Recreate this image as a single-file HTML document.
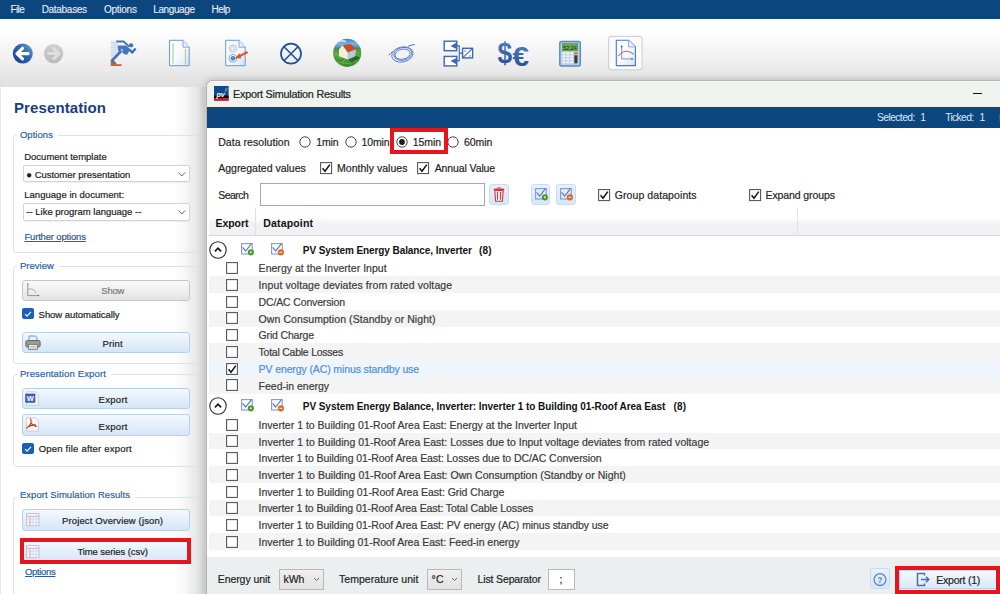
<!DOCTYPE html>
<html><head><meta charset="utf-8"><style>
html,body{margin:0;padding:0;width:1000px;height:594px;overflow:hidden;background:#e8e8e8}
body{position:relative;font-family:"Liberation Sans",sans-serif}
.t{position:absolute;white-space:nowrap;line-height:1;font-family:"Liberation Sans",sans-serif;-webkit-text-stroke-width:0.2px}
svg{overflow:visible}
</style></head><body>
<div style="position:absolute;left:0px;top:0px;width:1000px;height:594px;background:#e8e8e8"></div>
<div style="position:absolute;left:0px;top:0px;width:1000px;height:19px;background:#0c467f"></div>
<div class="t" style="left:10.60px;top:5.00px;font-size:10px;color:#e9eef4;letter-spacing:-0.671px;-webkit-text-stroke-width:0.1px">File</div>
<div class="t" style="left:41.70px;top:5.00px;font-size:10px;color:#e9eef4;letter-spacing:-0.301px;-webkit-text-stroke-width:0.1px">Databases</div>
<div class="t" style="left:104.00px;top:5.00px;font-size:10px;color:#e9eef4;letter-spacing:-0.260px;-webkit-text-stroke-width:0.1px">Options</div>
<div class="t" style="left:153.30px;top:5.00px;font-size:10px;color:#e9eef4;letter-spacing:-0.399px;-webkit-text-stroke-width:0.1px">Language</div>
<div class="t" style="left:211.60px;top:5.00px;font-size:10px;color:#e9eef4;letter-spacing:-0.622px;-webkit-text-stroke-width:0.1px">Help</div>
<div style="position:absolute;left:0px;top:19px;width:1000px;height:68px;background:linear-gradient(#ffffff 0%,#fcfcfc 25%,#f0f0f0 60%,#e5e5e5 85%,#e0e0e0 100%)"></div>
<div style="position:absolute;left:1px;top:86.5px;width:205px;height:510px;background:linear-gradient(90deg,#ffffff 0%,#ffffff 84%,#f6f6f6 90%,#e8e8e8 95%,#d8d8d8 99%,#e2e2e2 100%)"></div>
<svg style="position:absolute;left:0px;top:0px" width="1000" height="80" viewBox="0 0 1000 80">
<defs>
<linearGradient id="gBack" x1="0" y1="1" x2="1" y2="0"><stop offset="0" stop-color="#0f3f93"/><stop offset="0.55" stop-color="#2e63ad"/><stop offset="1" stop-color="#78a6da"/></linearGradient>
<linearGradient id="gFwd" x1="0" y1="0" x2="0" y2="1"><stop offset="0" stop-color="#cfcfcf"/><stop offset="1" stop-color="#b9b9b9"/></linearGradient>
<linearGradient id="gDoc" x1="0" y1="0" x2="1" y2="1"><stop offset="0" stop-color="#ffffff"/><stop offset="0.6" stop-color="#f4f8fc"/><stop offset="1" stop-color="#cfe0f2"/></linearGradient>
<linearGradient id="gSky" x1="0" y1="0" x2="0" y2="1"><stop offset="0" stop-color="#3f82c8"/><stop offset="0.18" stop-color="#7ab4e0"/><stop offset="0.3" stop-color="#5b8fa8"/><stop offset="0.34" stop-color="#4f8a52"/><stop offset="0.5" stop-color="#58a640"/><stop offset="1" stop-color="#3a8a2a"/></linearGradient>
<linearGradient id="gMoney" x1="0" y1="0" x2="0" y2="1"><stop offset="0" stop-color="#5a86c4"/><stop offset="1" stop-color="#1f4690"/></linearGradient>
</defs>
<circle cx="22.8" cy="53.6" r="10" fill="url(#gBack)"/>
<path d="M17 53.6 L22.5 48.3 M17 53.6 L22.5 58.9 M17.5 53.6 H28" stroke="#fff" stroke-width="3.2" stroke-linecap="round" stroke-linejoin="round" fill="none"/>
<circle cx="53.6" cy="53.6" r="9.6" fill="url(#gFwd)"/>
<path d="M59 53.6 L53.7 48.5 M59 53.6 L53.7 58.7 M58.5 53.6 H48.5" stroke="#dedede" stroke-width="3" stroke-linecap="round" stroke-linejoin="round" fill="none"/>

<!-- runner -->
<g transform="translate(105,36)">
  <rect x="5.8" y="4.8" width="7" height="17.5" fill="#dde7f3"/>
  <path d="M5.8 6.5h7M5.8 9h7M5.8 11.5h7M5.8 14h7M5.8 16.5h7M5.8 19h7M5.8 21.5h6" stroke="#c6d6ea" stroke-width="0.7"/>
  <path d="M11.3 5.5 H18.6 L24.2 10.6" stroke="#4272b8" stroke-width="1.9" fill="none" stroke-linejoin="round"/>
  <path d="M12.6 9.4 L21.2 9.4 L25.4 13.2 L23.6 16.2 L22.4 18.6 L19.8 18.6 L16.2 15.8 L15.2 17.6 L13.2 14.8 Z" fill="#4677bd"/>
  <path d="M15.6 13.2 L17.8 13.2 L17.2 16 Z" fill="#e8eef6"/>
  <circle cx="26.1" cy="9.3" r="2.1" fill="#3b6db4"/>
  <path d="M24.4 13.4 L27.2 16.6 L30.6 12.6" stroke="#3b6db4" stroke-width="2.3" fill="none" stroke-linejoin="round"/>
  <path d="M15.6 15.6 L7 24.6 L10.6 28.4" stroke="#4072b8" stroke-width="2.8" fill="none" stroke-linejoin="round"/>
  <path d="M5.8 24.8 V30 H16.6 V28.2 H10.2 Z" fill="#e1521c"/>
</g>
<!-- doc 1 -->
<path d="M169.5 40.3 H183 L189.2 47.2 V65.7 H169.5 Z" fill="url(#gDoc)" stroke="#6b9adc" stroke-width="1.0" stroke-linejoin="round"/>
<path d="M183 40.3 V47.2 H189.2" fill="#e6eef8" stroke="#7aa2da" stroke-width="0.9"/>
<path d="M173 43.5 V63.5 M185.4 49 V63.5" stroke="#a9c793" stroke-width="1"/>

<!-- doc 2 -->
<path d="M225.7 40.3 H239 L245.2 47.2 V65.7 H225.7 Z" fill="url(#gDoc)" stroke="#6b9adc" stroke-width="1.0" stroke-linejoin="round"/>
<path d="M239 40.3 V47.2 H245.2" fill="#e6eef8" stroke="#7aa2da" stroke-width="0.9"/>
<circle cx="232.9" cy="48.6" r="3.8" fill="none" stroke="#a8c0e0" stroke-width="0.9"/>
<circle cx="232.9" cy="48.6" r="2.2" fill="#f6e6e0" stroke="#b8cce6" stroke-width="0.8"/>
<circle cx="232.9" cy="58.3" r="3.9" fill="none" stroke="#7b9cc8" stroke-width="0.9"/>
<circle cx="232.9" cy="58.3" r="1.9" fill="#4f9ad8" stroke="#2a5c9c" stroke-width="0.7"/>
<path d="M247.6 52 L238.5 56.6" stroke="#e6521e" stroke-width="2.1"/>
<path d="M234.6 58.6 L239.6 53.2 L241.4 58.2 Z" fill="#e6521e"/>

<!-- circle X -->
<circle cx="291" cy="53.7" r="10" fill="none" stroke="#1d4f9c" stroke-width="1.7"/>
<path d="M284 46.7 L298 60.7 M298 46.7 L284 60.7" stroke="#1d4f9c" stroke-width="1.6"/>

<!-- globe house -->
<circle cx="347.2" cy="52.9" r="14.1" fill="url(#gSky)"/>
<path d="M336 42 Q341 40 346 41.5" stroke="#eef4fa" stroke-width="1.6" opacity="0.8" fill="none"/><path d="M338 58 L357 52 M336 62 L352 64 M345 59 L341 66 M350 58 L359 63 M334 54 L344 57" stroke="#9ad088" stroke-width="0.5" opacity="0.8"/>
<path d="M348 59.5 L356 56 L360 58 L352 62 Z" fill="#1f4a1c" opacity="0.7"/>
<path d="M339 49.5 L342.5 45 L347.9 52.6 V59.4 L339 56.2 Z" fill="#f6eed6"/>
<path d="M342.5 45 L350.6 44.1 L356 49.3 L347.9 52.6 Z" fill="#d24a2e"/>
<path d="M347.9 52.6 L356 49.3 L355.2 56.2 L347.9 59.4 Z" fill="#b7c6dc"/>

<!-- cable coil -->
<g fill="none" stroke="#4b73c4" stroke-width="0.85">
 <ellipse cx="402.6" cy="54.2" rx="7.6" ry="5.0" transform="rotate(-12 402.6 54.2)"/>
 <ellipse cx="402.9" cy="53.9" rx="9.2" ry="6.3" transform="rotate(-12 402.6 54.2)"/>
 <ellipse cx="402.3" cy="54.4" rx="10.8" ry="7.5" transform="rotate(-12 402.6 54.2)"/>
 <path d="M408 46.2 Q412.5 44.6 414.8 44.5" stroke-width="1"/>
 <path d="M392.6 51.5 Q390.3 53.4 388.8 55.3" stroke-width="1"/>
</g>
<!-- inverter diagram -->
<g stroke="#3b68b0" stroke-width="1.4" fill="none">
 <rect x="444.2" y="41.2" width="12.6" height="9.5" fill="#fff"/>
 <rect x="444.2" y="56.4" width="12.6" height="9.5" fill="#fff"/>
 <path d="M456.8 45.9 H459.3 V60.6 H456.8 M459.3 53.1 H462.4" stroke-width="1.1"/>
 <rect x="462.6" y="48.3" width="10" height="9.6" fill="#fff"/>
 <path d="M462.6 57.9 L472.6 48.3" stroke-width="1.1"/>
 <path d="M464 51 h2 M469 56 h2" stroke-width="0.8"/>
</g>
<path d="M450.5 45.9 L456.8 42.6 V49.3 Z" fill="#3b68b0"/>
<path d="M450.5 61.1 L456.8 57.8 V64.5 Z" fill="#3b68b0"/>

<!-- $ euro -->
<text x="497.6" y="63.2" font-family="Liberation Sans" font-weight="bold" font-size="30" fill="url(#gMoney)" transform="translate(497.6 0) scale(0.88 1) translate(-497.6 0)">$</text>
<text x="512.6" y="65.8" font-family="Liberation Sans" font-weight="bold" font-size="28" fill="url(#gMoney)" transform="translate(512.6 0) scale(1.06 1) translate(-512.6 0)">€</text>

<!-- calculator -->
<rect x="559.8" y="41.5" width="20.5" height="24.5" rx="1.8" fill="#b6cfe9" stroke="#5a88c6" stroke-width="1.4"/>
<rect x="562.3" y="43.6" width="15.5" height="7.2" fill="#6aa84f" stroke="#4d8a38" stroke-width="0.5"/>
<text x="563" y="49.8" font-family="Liberation Sans" font-size="6" fill="#203818" letter-spacing="-0.3">52.24</text>
<g fill="#f4f6f8">
 <rect x="562.3" y="52.3" width="3" height="2"/><rect x="566.3" y="52.3" width="3" height="2"/><rect x="570.3" y="52.3" width="3" height="2"/>
 <rect x="562.3" y="55.3" width="3" height="2"/><rect x="566.3" y="55.3" width="3" height="2"/><rect x="570.3" y="55.3" width="3" height="2"/>
 <rect x="562.3" y="58.3" width="3" height="2"/><rect x="566.3" y="58.3" width="3" height="2"/><rect x="570.3" y="58.3" width="3" height="2"/>
 <rect x="562.3" y="61.3" width="3" height="2"/><rect x="566.3" y="61.3" width="3" height="2"/><rect x="570.3" y="61.3" width="3" height="2"/>
</g>
<rect x="574.3" y="52.3" width="3.2" height="2" fill="#e8602a"/>
<rect x="574.3" y="55.3" width="3.2" height="8" fill="#3c3c3c"/>

<!-- selected chart button -->
<rect x="608.6" y="36.3" width="33.5" height="33.5" rx="3" fill="#fbfbfb" stroke="#d2d2d2" stroke-width="1.2"/>
<path d="M616.3 40.3 H628.6 L635.4 46.9 V65.6 H616.3 Z" fill="url(#gDoc)" stroke="#3f7bd2" stroke-width="1.1" stroke-linejoin="round"/>
<path d="M628.6 40.3 V46.9 H635.4" fill="#eef3fa" stroke="#6f9ada" stroke-width="0.8"/>
<path d="M621.7 46.6 V58.9 H632" stroke="#5d8fd6" stroke-width="0.9" fill="none"/>
<circle cx="621.7" cy="46.5" r="0.9" fill="#2a5aa8"/>
<path d="M631.5 57.8 L633.5 58.9 L631.5 60 Z" fill="#2a5aa8"/>
<path d="M618.2 55.9 Q626 47.5 633.7 54.4" stroke="#e2557e" stroke-width="1.1" fill="none"/>
</svg>
<div class="t" style="left:14.00px;top:100.00px;font-size:15px;color:#173f7c;font-weight:bold;letter-spacing:0.104px;-webkit-text-stroke-width:0">Presentation</div>
<div style="position:absolute;left:12.6px;top:134.9px;width:186.1px;height:118px;border:1px solid #dde4e6;border-radius:3px;box-sizing:border-box"></div>
<div style="position:absolute;left:16.6px;top:131.9px;width:41px;height:6px;background:#fff"></div>
<div class="t" style="left:19.90px;top:130.00px;font-size:9.5px;color:#2f5fa6;letter-spacing:0.043px;">Options</div>
<div class="t" style="left:24.20px;top:152.00px;font-size:9.5px;color:#1e1e1e;letter-spacing:0.008px;">Document template</div>
<div style="position:absolute;left:22.7px;top:165.3px;width:167px;height:17.2px;background:#fff;border:1px solid #d3d3d3;border-radius:2px;box-sizing:border-box;box-shadow:0 1px 1px rgba(0,0,0,0.06)"></div>
<div class="t" style="left:26.30px;top:170.00px;font-size:9.5px;color:#1e1e1e;letter-spacing:-0.022px;">● Customer presentation</div>
<svg style="position:absolute;left:178.2px;top:171.6px" width="8" height="5" viewBox="0 0 8 5"><path d="M0.5 0.5 L3.8 4 L7.1 0.5" stroke="#555" stroke-width="0.9" fill="none"/></svg>
<div class="t" style="left:24.20px;top:190.00px;font-size:9.5px;color:#1e1e1e;letter-spacing:0.035px;">Language in document:</div>
<div style="position:absolute;left:22.7px;top:203px;width:167px;height:17.8px;background:#fff;border:1px solid #d3d3d3;border-radius:2px;box-sizing:border-box;box-shadow:0 1px 1px rgba(0,0,0,0.06)"></div>
<div class="t" style="left:26.30px;top:207.00px;font-size:9.5px;color:#1e1e1e;letter-spacing:-0.004px;">-- Like program language --</div>
<svg style="position:absolute;left:178.2px;top:209.6px" width="8" height="5" viewBox="0 0 8 5"><path d="M0.5 0.5 L3.8 4 L7.1 0.5" stroke="#555" stroke-width="0.9" fill="none"/></svg>
<div class="t" style="left:24.40px;top:232.00px;font-size:9.5px;color:#2a5aa0;letter-spacing:-0.171px;text-decoration:underline;text-underline-offset:1px">Further options</div>
<div style="position:absolute;left:12.6px;top:265.7px;width:186.0px;height:98.3px;border:1px solid #dde4e6;border-radius:3px;box-sizing:border-box"></div>
<div style="position:absolute;left:16.6px;top:262.7px;width:42px;height:6px;background:#fff"></div>
<div class="t" style="left:19.90px;top:261.00px;font-size:9.5px;color:#2f5fa6;letter-spacing:0.035px;">Preview</div>
<div style="position:absolute;left:22.2px;top:280px;width:167.8px;height:21.3px;background:linear-gradient(#f9f9f9,#ededed 60%,#e2e2e2);border:1px solid #c6c6c6;border-radius:3px;box-sizing:border-box"></div>
<svg style="position:absolute;left:26px;top:283px" width="14" height="15" viewBox="0 0 14 15"><path d="M1.8 1 V12.6 H12.5" stroke="#8a8a8a" stroke-width="0.9" fill="none"/><path d="M1.8 6 Q8 5 10 10" stroke="#a0a0a0" stroke-width="0.8" fill="none"/><circle cx="1.8" cy="1" r="0.8" fill="#777"/><circle cx="12.5" cy="12.6" r="0.8" fill="#777"/></svg>
<div class="t" style="left:101.30px;top:286.00px;font-size:9.5px;color:#7b7b7b;letter-spacing:-0.255px;">Show</div>
<div style="position:absolute;left:22.2px;top:308.2px;width:11.5px;height:11.3px;background:#1b5fb9;border-radius:2px"></div>
<svg style="position:absolute;left:22.2px;top:308.2px" width="12" height="12" viewBox="0 0 12 12"><path d="M3 6 L5 8.2 L9 3.8" stroke="#fff" stroke-width="1.1" fill="none"/></svg>
<div class="t" style="left:38.60px;top:310.00px;font-size:9.5px;color:#1e1e1e;letter-spacing:-0.050px;">Show automatically</div>
<div style="position:absolute;left:22.2px;top:332.2px;width:167.8px;height:21.3px;background:linear-gradient(#f4f9fe,#e4effb 50%,#d6e6f8);border:1px solid #b5d1ef;border-radius:3px;box-sizing:border-box"></div>
<svg style="position:absolute;left:25px;top:335px" width="16" height="16" viewBox="0 0 16 16"><path d="M4 1 H10.5 L12 2.5 V6 H4 Z" fill="#e8f1fb" stroke="#5b8fd0" stroke-width="0.9"/>
<rect x="0.8" y="5.5" width="14.4" height="6.5" rx="1.5" fill="#9a9a9a" stroke="#555" stroke-width="0.8"/>
<rect x="3.5" y="9.5" width="9" height="5" fill="#f0f0f0" stroke="#666" stroke-width="0.7"/>
<path d="M4.5 11.5 H11.5 M4.5 13 H11.5" stroke="#888" stroke-width="0.5"/></svg>
<div class="t" style="left:102.50px;top:339.00px;font-size:9.5px;color:#1e1e1e;letter-spacing:0.167px;">Print</div>
<div style="position:absolute;left:12.6px;top:373.5px;width:186.0px;height:93.7px;border:1px solid #dde4e6;border-radius:3px;box-sizing:border-box"></div>
<div style="position:absolute;left:16.6px;top:370.5px;width:94px;height:6px;background:#fff"></div>
<div class="t" style="left:19.90px;top:369.00px;font-size:9.5px;color:#2f5fa6;letter-spacing:0.142px;">Presentation Export</div>
<div style="position:absolute;left:22.2px;top:388.1px;width:167.8px;height:21.1px;background:linear-gradient(#f4f9fe,#e4effb 50%,#d6e6f8);border:1px solid #b5d1ef;border-radius:3px;box-sizing:border-box"></div>
<svg style="position:absolute;left:25px;top:391px" width="16" height="16" viewBox="0 0 16 16"><path d="M1.5 0.8 H10.5 L13.5 3.8 V14.2 H1.5 Z" fill="#f6f6f6" stroke="#c8c8c8" stroke-width="0.8"/>
<rect x="0.7" y="3" width="9.3" height="8.3" fill="#3a5fc8" stroke="#2a46a0" stroke-width="0.6"/>
<text x="1.7" y="10" font-family="Liberation Sans" font-weight="bold" font-size="7.5" fill="#fff">W</text></svg>
<div class="t" style="left:98.50px;top:395.00px;font-size:9.5px;color:#1e1e1e;letter-spacing:0.309px;">Export</div>
<div style="position:absolute;left:22.2px;top:414.2px;width:167.8px;height:21.9px;background:linear-gradient(#f4f9fe,#e4effb 50%,#d6e6f8);border:1px solid #b5d1ef;border-radius:3px;box-sizing:border-box"></div>
<svg style="position:absolute;left:25px;top:417px" width="16" height="16" viewBox="0 0 16 16"><path d="M1.5 0.8 H10.5 L13.5 3.8 V14.2 H1.5 Z" fill="#f8f8f8" stroke="#c8c8c8" stroke-width="0.8"/>
<path d="M5.5 1.5 Q6.5 4 6 6 Q5 9 1.5 11.5 M6 6 Q8 9 12 9.5 M2.5 10 Q7 7.5 11 8" stroke="#d42a1e" stroke-width="1.1" fill="none"/></svg>
<div class="t" style="left:98.50px;top:422.00px;font-size:9.5px;color:#1e1e1e;letter-spacing:0.309px;">Export</div>
<div style="position:absolute;left:22.2px;top:442.7px;width:11.5px;height:11.3px;background:#1b5fb9;border-radius:2px"></div>
<svg style="position:absolute;left:22.2px;top:442.7px" width="12" height="12" viewBox="0 0 12 12"><path d="M3 6 L5 8.2 L9 3.8" stroke="#fff" stroke-width="1.1" fill="none"/></svg>
<div class="t" style="left:38.70px;top:444.00px;font-size:9.5px;color:#1e1e1e;letter-spacing:0.204px;">Open file after export</div>
<div style="position:absolute;left:12.6px;top:496.7px;width:186.0px;height:120px;border:1px solid #dde4e6;border-radius:3px;box-sizing:border-box"></div>
<div style="position:absolute;left:16.6px;top:493.7px;width:118px;height:6px;background:#fff"></div>
<div class="t" style="left:19.90px;top:490.00px;font-size:9.5px;color:#2f5fa6;letter-spacing:0.051px;">Export Simulation Results</div>
<div style="position:absolute;left:22.2px;top:509.2px;width:168.3px;height:21.6px;background:linear-gradient(#f4f9fe,#e4effb 50%,#d6e6f8);border:1px solid #b5d1ef;border-radius:3px;box-sizing:border-box"></div>
<svg style="position:absolute;left:26px;top:513px" width="14" height="14" viewBox="0 0 14 14"><rect x="0.6" y="0.6" width="12.4" height="12.2" fill="#f4f7fb" stroke="#a9bcd6" stroke-width="0.8"/>
<path d="M0.6 3.3 H13 M4 3.3 V12.8 M7.2 3.3 V12.8 M10.2 3.3 V12.8 M0.6 6.2 H13 M0.6 9.3 H13" stroke="#c2cde0" stroke-width="0.6"/>
<path d="M4 3.3 V12.8" stroke="#e88" stroke-width="0.6"/><path d="M0.6 3.3 H13" stroke="#e7a0a0" stroke-width="0.7"/></svg>
<div class="t" style="left:62.00px;top:516.00px;font-size:9.5px;color:#1e1e1e;letter-spacing:0.128px;">Project Overview (json)</div>
<div style="position:absolute;left:22.2px;top:540px;width:168.3px;height:22px;background:linear-gradient(#f4f9fe,#e4effb 50%,#d6e6f8);border:1px solid #b5d1ef;border-radius:3px;box-sizing:border-box"></div>
<svg style="position:absolute;left:26px;top:544.5px" width="14" height="14" viewBox="0 0 14 14"><rect x="0.6" y="0.6" width="12.4" height="12.2" fill="#f4f7fb" stroke="#a9bcd6" stroke-width="0.8"/>
<path d="M0.6 3.3 H13 M4 3.3 V12.8 M7.2 3.3 V12.8 M10.2 3.3 V12.8 M0.6 6.2 H13 M0.6 9.3 H13" stroke="#c2cde0" stroke-width="0.6"/>
<path d="M4 3.3 V12.8" stroke="#e88" stroke-width="0.6"/><path d="M0.6 3.3 H13" stroke="#e7a0a0" stroke-width="0.7"/></svg>
<div class="t" style="left:77.40px;top:547.00px;font-size:9.5px;color:#1e1e1e;letter-spacing:-0.085px;">Time series (csv)</div>
<div style="position:absolute;left:20.3px;top:538.2px;width:170.4px;height:26.3px;border:4.3px solid #e8141b;box-sizing:border-box"></div>
<div class="t" style="left:25.00px;top:567.00px;font-size:9.5px;color:#2a5aa0;letter-spacing:-0.340px;text-decoration:underline;text-underline-offset:1px">Options</div>
<div style="position:absolute;left:206px;top:79.5px;width:800px;height:520px;background:#fff;border-left:1px solid #b4b4b4;border-top:1px solid #b4b4b4;border-top-left-radius:7px;box-sizing:border-box;box-shadow:-1px -1px 7px rgba(0,0,0,0.16)"></div>
<div style="position:absolute;left:207px;top:80.5px;width:793px;height:26.5px;background:linear-gradient(#fbfdfb,#eef3ef 2px);border-top-left-radius:6px"></div>
<svg style="position:absolute;left:214px;top:86px" width="15" height="15" viewBox="0 0 15 15"><rect x="0" y="0" width="14.6" height="14.6" fill="#0d4a8c"/>
<rect x="0" y="9.6" width="14.6" height="2.6" fill="#0a0a0a"/>
<rect x="0" y="12.2" width="14.6" height="2.4" fill="#e3141c"/>
<text x="2.6" y="11.4" font-family="Liberation Sans" font-weight="bold" font-style="italic" font-size="7.2" fill="#fff" letter-spacing="-0.3">pv</text>
<path d="M11 6.2 L12.2 2 Q13.6 2 13.2 3.4 Q12.8 4.6 11.6 4.4" stroke="#9fb8d8" stroke-width="0.6" fill="none"/></svg>
<div class="t" style="left:233.00px;top:89.00px;font-size:10.8px;color:#222;letter-spacing:-0.234px;">Export Simulation Results</div>
<div style="position:absolute;left:973.2px;top:92.6px;width:9.3px;height:1.4px;background:#111"></div>
<div style="position:absolute;left:207px;top:107px;width:793px;height:21px;background:#0c467f"></div>
<div class="t" style="left:877.00px;top:113.00px;font-size:10.3px;color:#dfe7f0;letter-spacing:-0.579px;-webkit-text-stroke-width:0">Selected:</div>
<div class="t" style="left:920.30px;top:113.00px;font-size:10.3px;color:#dfe7f0;-webkit-text-stroke-width:0">1</div>
<div class="t" style="left:945.20px;top:113.00px;font-size:10.3px;color:#dfe7f0;letter-spacing:-0.651px;-webkit-text-stroke-width:0">Ticked:</div>
<div class="t" style="left:979.50px;top:113.00px;font-size:10.3px;color:#dfe7f0;-webkit-text-stroke-width:0">1</div>
<div style="position:absolute;left:998.8px;top:114.4px;width:1.2px;height:6.6px;background:#1f5fd0"></div>
<div class="t" style="left:218.20px;top:137.00px;font-size:10.5px;color:#1f1f1f;letter-spacing:0.055px;">Data resolution</div>
<svg style="position:absolute;left:298.8px;top:135.5px" width="12" height="12" viewBox="0 0 12 12"><circle cx="6" cy="6" r="5.2" fill="#fff" stroke="#333" stroke-width="0.9"/></svg>
<div class="t" style="left:316.20px;top:137.00px;font-size:10.5px;color:#1f1f1f;letter-spacing:-0.120px;">1min</div>
<svg style="position:absolute;left:344.5px;top:135.5px" width="12" height="12" viewBox="0 0 12 12"><circle cx="6" cy="6" r="5.2" fill="#fff" stroke="#333" stroke-width="0.9"/></svg>
<div class="t" style="left:361.60px;top:137.00px;font-size:10.5px;color:#1f1f1f;letter-spacing:-0.150px;">10min</div>
<svg style="position:absolute;left:396.2px;top:135.5px" width="12" height="12" viewBox="0 0 12 12"><circle cx="6" cy="6" r="5.2" fill="#fff" stroke="#333" stroke-width="0.9"/><circle cx="6" cy="6" r="2.9" fill="#1a1a1a"/></svg>
<div class="t" style="left:412.80px;top:137.00px;font-size:10.5px;color:#1f1f1f;letter-spacing:-0.100px;">15min</div>
<svg style="position:absolute;left:446.6px;top:135.5px" width="12" height="12" viewBox="0 0 12 12"><circle cx="6" cy="6" r="5.2" fill="#fff" stroke="#333" stroke-width="0.9"/></svg>
<div class="t" style="left:464.00px;top:137.00px;font-size:10.5px;color:#1f1f1f;letter-spacing:-0.075px;">60min</div>
<div class="t" style="left:218.20px;top:163.00px;font-size:10.5px;color:#1f1f1f;letter-spacing:0.002px;">Aggregated values</div>
<svg style="position:absolute;left:319.8px;top:162px" width="12.2" height="12.2" viewBox="0 0 12.2 12.2"><rect x="0.6" y="0.6" width="11.0" height="11.0" fill="#fff" stroke="#505050" stroke-width="1.05"/><path d="M2.6 6.2 L5 9.2 L9.8 2.6" stroke="#111" stroke-width="1.5" fill="none"/></svg>
<div class="t" style="left:337.00px;top:163.00px;font-size:10.5px;color:#1f1f1f;letter-spacing:0.028px;">Monthly values</div>
<svg style="position:absolute;left:417px;top:162px" width="12.2" height="12.2" viewBox="0 0 12.2 12.2"><rect x="0.6" y="0.6" width="11.0" height="11.0" fill="#fff" stroke="#505050" stroke-width="1.05"/><path d="M2.6 6.2 L5 9.2 L9.8 2.6" stroke="#111" stroke-width="1.5" fill="none"/></svg>
<div class="t" style="left:434.70px;top:163.00px;font-size:10.5px;color:#1f1f1f;letter-spacing:-0.108px;">Annual Value</div>
<div class="t" style="left:218.20px;top:190.00px;font-size:10.5px;color:#1f1f1f;letter-spacing:-0.534px;">Search</div>
<div style="position:absolute;left:259.5px;top:183.3px;width:225.8px;height:22.3px;background:#fff;border:1px solid #a9a9a9;box-sizing:border-box"></div>
<div style="position:absolute;left:489.3px;top:184px;width:19.6px;height:21px;background:linear-gradient(#e8f1fc,#d6e6f9);border:1px solid #cadcf3;border-radius:3px;box-sizing:border-box"></div>
<svg style="position:absolute;left:493px;top:187px" width="12" height="15" viewBox="0 0 12 15"><path d="M4.3 1.8 V0.9 H7.7 V1.8" stroke="#d9363e" stroke-width="0.9" fill="none"/>
<path d="M0.8 2.3 H11.2" stroke="#d9363e" stroke-width="1.4"/>
<path d="M1.8 3.5 L2.6 14.2 H9.4 L10.2 3.5 Z" fill="#fbe9ea" stroke="#d9363e" stroke-width="1.1"/>
<path d="M4.5 5 V12.6 M7.5 5 V12.6" stroke="#d9363e" stroke-width="1"/></svg>
<div style="position:absolute;left:531px;top:184px;width:19.2px;height:21px;background:linear-gradient(#e8f1fc,#d6e6f9);border:1px solid #cadcf3;border-radius:3px;box-sizing:border-box"></div>
<svg style="position:absolute;left:534.5px;top:187.5px" width="14" height="14" viewBox="0 0 14 14"><rect x="0.6" y="0.6" width="10.6" height="10.4" fill="none" stroke="#7b9bd2" stroke-width="1.1"/>
<path d="M1.6 4.3 L4.7 8 L10.6 0.3" stroke="#5b7fc0" stroke-width="1.2" fill="none"/><circle cx="9.9" cy="9.3" r="3.1" fill="#4a9b2c"/><circle cx="9.9" cy="9.3" r="1" fill="#dff0d0"/></svg>
<div style="position:absolute;left:556.2px;top:184px;width:19.8px;height:21px;background:linear-gradient(#e8f1fc,#d6e6f9);border:1px solid #cadcf3;border-radius:3px;box-sizing:border-box"></div>
<svg style="position:absolute;left:559.7px;top:187.5px" width="14" height="14" viewBox="0 0 14 14"><rect x="0.6" y="0.6" width="10.6" height="10.4" fill="none" stroke="#7b9bd2" stroke-width="1.1"/>
<path d="M1.6 4.3 L4.7 8 L10.6 0.3" stroke="#5b7fc0" stroke-width="1.2" fill="none"/><circle cx="9.9" cy="9.3" r="3.1" fill="#e8641c"/><path d="M8.4 9.3 H11.4" stroke="#fff" stroke-width="1"/></svg>
<svg style="position:absolute;left:597.8px;top:189px" width="12.2" height="12.2" viewBox="0 0 12.2 12.2"><rect x="0.6" y="0.6" width="11.0" height="11.0" fill="#fff" stroke="#505050" stroke-width="1.05"/><path d="M2.6 6.2 L5 9.2 L9.8 2.6" stroke="#111" stroke-width="1.5" fill="none"/></svg>
<div class="t" style="left:614.70px;top:190.00px;font-size:10.5px;color:#1f1f1f;letter-spacing:0.090px;">Group datapoints</div>
<svg style="position:absolute;left:748.6px;top:189px" width="12.2" height="12.2" viewBox="0 0 12.2 12.2"><rect x="0.6" y="0.6" width="11.0" height="11.0" fill="#fff" stroke="#505050" stroke-width="1.05"/><path d="M2.6 6.2 L5 9.2 L9.8 2.6" stroke="#111" stroke-width="1.5" fill="none"/></svg>
<div class="t" style="left:765.50px;top:190.00px;font-size:10.5px;color:#1f1f1f;letter-spacing:-0.095px;">Expand groups</div>
<div style="position:absolute;left:209px;top:207.5px;width:791px;height:28px;background:linear-gradient(#ffffff 0%,#ffffff 36%,#f6f7f8 46%,#f1f2f4 56%,#f0f1f3 100%)"></div>
<div style="position:absolute;left:209px;top:234.8px;width:791px;height:1.3px;background:#d9d9d9"></div>
<div style="position:absolute;left:255.3px;top:208px;width:1px;height:27px;background:#e0e0e0"></div>
<div style="position:absolute;left:797.3px;top:208px;width:1px;height:27px;background:#e4e4e4"></div>
<div class="t" style="left:215.60px;top:218.00px;font-size:10.5px;color:#111;font-weight:bold;letter-spacing:-0.091px;-webkit-text-stroke-width:0">Export</div>
<div class="t" style="left:263.20px;top:218.00px;font-size:10.5px;color:#111;font-weight:bold;letter-spacing:0.173px;-webkit-text-stroke-width:0">Datapoint</div>
<svg style="position:absolute;left:208.5px;top:240.5px" width="18" height="18" viewBox="0 0 18 18"><circle cx="9" cy="9" r="8.2" fill="#fff" stroke="#2a2a2a" stroke-width="1.1"/><path d="M5.9 10.3 L9 7.2 L12.1 10.3" stroke="#1a1a1a" stroke-width="1.8" fill="none"/></svg>
<svg style="position:absolute;left:241px;top:243.0px" width="14" height="14" viewBox="0 0 14 14"><rect x="0.6" y="0.6" width="10.6" height="10.4" fill="none" stroke="#7b9bd2" stroke-width="1.1"/>
<path d="M1.6 4.3 L4.7 8 L10.6 0.3" stroke="#5b7fc0" stroke-width="1.2" fill="none"/><circle cx="9.9" cy="9.3" r="3.1" fill="#4a9b2c"/><circle cx="9.9" cy="9.3" r="1" fill="#dff0d0"/></svg>
<svg style="position:absolute;left:271px;top:243.0px" width="14" height="14" viewBox="0 0 14 14"><rect x="0.6" y="0.6" width="10.6" height="10.4" fill="none" stroke="#7b9bd2" stroke-width="1.1"/>
<path d="M1.6 4.3 L4.7 8 L10.6 0.3" stroke="#5b7fc0" stroke-width="1.2" fill="none"/><circle cx="9.9" cy="9.3" r="3.1" fill="#e8641c"/><path d="M8.4 9.3 H11.4" stroke="#fff" stroke-width="1"/></svg>
<div class="t" style="left:302.80px;top:246.00px;font-size:10px;color:#111;font-weight:bold;letter-spacing:-0.083px;-webkit-text-stroke-width:0">PV System Energy Balance, Inverter</div>
<div class="t" style="left:479.00px;top:246.00px;font-size:10px;color:#111;font-weight:bold;letter-spacing:0.189px;-webkit-text-stroke-width:0">(8)</div>
<svg style="position:absolute;left:226.1px;top:262.2px" width="12" height="12" viewBox="0 0 12 12"><rect x="0.6" y="0.6" width="10.8" height="10.8" fill="#fff" stroke="#505050" stroke-width="1.05"/></svg>
<div class="t" style="left:258.60px;top:263.00px;font-size:10.5px;color:#3a3a3a;letter-spacing:0.028px;">Energy at the Inverter Input</div>
<div style="position:absolute;left:209px;top:276.25px;width:791px;height:16.75px;background:#f4f4f4"></div>
<svg style="position:absolute;left:226.1px;top:278.95px" width="12" height="12" viewBox="0 0 12 12"><rect x="0.6" y="0.6" width="10.8" height="10.8" fill="#fff" stroke="#505050" stroke-width="1.05"/></svg>
<div class="t" style="left:258.60px;top:280.00px;font-size:10.5px;color:#3a3a3a;letter-spacing:0.095px;">Input voltage deviates from rated voltage</div>
<svg style="position:absolute;left:226.1px;top:295.7px" width="12" height="12" viewBox="0 0 12 12"><rect x="0.6" y="0.6" width="10.8" height="10.8" fill="#fff" stroke="#505050" stroke-width="1.05"/></svg>
<div class="t" style="left:258.60px;top:297.00px;font-size:10.5px;color:#3a3a3a;letter-spacing:-0.153px;">DC/AC Conversion</div>
<div style="position:absolute;left:209px;top:309.75px;width:791px;height:16.75px;background:#f4f4f4"></div>
<svg style="position:absolute;left:226.1px;top:312.45px" width="12" height="12" viewBox="0 0 12 12"><rect x="0.6" y="0.6" width="10.8" height="10.8" fill="#fff" stroke="#505050" stroke-width="1.05"/></svg>
<div class="t" style="left:258.60px;top:314.00px;font-size:10.5px;color:#3a3a3a;letter-spacing:0.076px;">Own Consumption (Standby or Night)</div>
<svg style="position:absolute;left:226.1px;top:329.2px" width="12" height="12" viewBox="0 0 12 12"><rect x="0.6" y="0.6" width="10.8" height="10.8" fill="#fff" stroke="#505050" stroke-width="1.05"/></svg>
<div class="t" style="left:258.60px;top:330.00px;font-size:10.5px;color:#3a3a3a;letter-spacing:-0.169px;">Grid Charge</div>
<div style="position:absolute;left:209px;top:343.25px;width:791px;height:16.75px;background:#f4f4f4"></div>
<svg style="position:absolute;left:226.1px;top:345.95px" width="12" height="12" viewBox="0 0 12 12"><rect x="0.6" y="0.6" width="10.8" height="10.8" fill="#fff" stroke="#505050" stroke-width="1.05"/></svg>
<div class="t" style="left:258.60px;top:347.00px;font-size:10.5px;color:#3a3a3a;letter-spacing:-0.242px;">Total Cable Losses</div>
<div style="position:absolute;left:209px;top:360.0px;width:791px;height:16.75px;background:#eef5fd"></div>
<svg style="position:absolute;left:226.1px;top:362.7px" width="12" height="12" viewBox="0 0 12 12"><rect x="0.6" y="0.6" width="10.8" height="10.8" fill="#fff" stroke="#505050" stroke-width="1.05"/><path d="M2.6 6.2 L5 9.2 L9.8 2.6" stroke="#111" stroke-width="1.5" fill="none"/></svg>
<div class="t" style="left:258.60px;top:364.00px;font-size:10.5px;color:#4f8fdc;letter-spacing:-0.113px;">PV energy (AC) minus standby use</div>
<div style="position:absolute;left:209px;top:376.75px;width:791px;height:16.75px;background:#f4f4f4"></div>
<svg style="position:absolute;left:226.1px;top:379.45px" width="12" height="12" viewBox="0 0 12 12"><rect x="0.6" y="0.6" width="10.8" height="10.8" fill="#fff" stroke="#505050" stroke-width="1.05"/></svg>
<div class="t" style="left:258.60px;top:381.00px;font-size:10.5px;color:#3a3a3a;letter-spacing:-0.010px;">Feed-in energy</div>
<svg style="position:absolute;left:208.5px;top:396.7px" width="18" height="18" viewBox="0 0 18 18"><circle cx="9" cy="9" r="8.2" fill="#fff" stroke="#2a2a2a" stroke-width="1.1"/><path d="M5.9 10.3 L9 7.2 L12.1 10.3" stroke="#1a1a1a" stroke-width="1.8" fill="none"/></svg>
<svg style="position:absolute;left:241px;top:399.2px" width="14" height="14" viewBox="0 0 14 14"><rect x="0.6" y="0.6" width="10.6" height="10.4" fill="none" stroke="#7b9bd2" stroke-width="1.1"/>
<path d="M1.6 4.3 L4.7 8 L10.6 0.3" stroke="#5b7fc0" stroke-width="1.2" fill="none"/><circle cx="9.9" cy="9.3" r="3.1" fill="#4a9b2c"/><circle cx="9.9" cy="9.3" r="1" fill="#dff0d0"/></svg>
<svg style="position:absolute;left:271px;top:399.2px" width="14" height="14" viewBox="0 0 14 14"><rect x="0.6" y="0.6" width="10.6" height="10.4" fill="none" stroke="#7b9bd2" stroke-width="1.1"/>
<path d="M1.6 4.3 L4.7 8 L10.6 0.3" stroke="#5b7fc0" stroke-width="1.2" fill="none"/><circle cx="9.9" cy="9.3" r="3.1" fill="#e8641c"/><path d="M8.4 9.3 H11.4" stroke="#fff" stroke-width="1"/></svg>
<div class="t" style="left:302.80px;top:402.00px;font-size:10px;color:#111;font-weight:bold;letter-spacing:-0.053px;-webkit-text-stroke-width:0">PV System Energy Balance, Inverter: Inverter 1 to Building 01-Roof Area East</div>
<div class="t" style="left:673.40px;top:402.00px;font-size:10px;color:#111;font-weight:bold;letter-spacing:0.189px;-webkit-text-stroke-width:0">(8)</div>
<svg style="position:absolute;left:226.1px;top:418.55px" width="12" height="12" viewBox="0 0 12 12"><rect x="0.6" y="0.6" width="10.8" height="10.8" fill="#fff" stroke="#505050" stroke-width="1.05"/></svg>
<div class="t" style="left:258.60px;top:420.00px;font-size:10.5px;color:#3a3a3a;letter-spacing:0.003px;">Inverter 1 to Building 01-Roof Area East: Energy at the Inverter Input</div>
<div style="position:absolute;left:209px;top:432.6px;width:791px;height:16.75px;background:#f4f4f4"></div>
<svg style="position:absolute;left:226.1px;top:435.3px" width="12" height="12" viewBox="0 0 12 12"><rect x="0.6" y="0.6" width="10.8" height="10.8" fill="#fff" stroke="#505050" stroke-width="1.05"/></svg>
<div class="t" style="left:258.60px;top:437.00px;font-size:10.5px;color:#3a3a3a;letter-spacing:0.017px;">Inverter 1 to Building 01-Roof Area East: Losses due to Input voltage deviates from rated voltage</div>
<svg style="position:absolute;left:226.1px;top:452.05px" width="12" height="12" viewBox="0 0 12 12"><rect x="0.6" y="0.6" width="10.8" height="10.8" fill="#fff" stroke="#505050" stroke-width="1.05"/></svg>
<div class="t" style="left:258.60px;top:453.00px;font-size:10.5px;color:#3a3a3a;letter-spacing:-0.068px;">Inverter 1 to Building 01-Roof Area East: Losses due to DC/AC Conversion</div>
<div style="position:absolute;left:209px;top:466.1px;width:791px;height:16.75px;background:#f4f4f4"></div>
<svg style="position:absolute;left:226.1px;top:468.8px" width="12" height="12" viewBox="0 0 12 12"><rect x="0.6" y="0.6" width="10.8" height="10.8" fill="#fff" stroke="#505050" stroke-width="1.05"/></svg>
<div class="t" style="left:258.60px;top:470.00px;font-size:10.5px;color:#3a3a3a;letter-spacing:0.025px;">Inverter 1 to Building 01-Roof Area East: Own Consumption (Standby or Night)</div>
<svg style="position:absolute;left:226.1px;top:485.55px" width="12" height="12" viewBox="0 0 12 12"><rect x="0.6" y="0.6" width="10.8" height="10.8" fill="#fff" stroke="#505050" stroke-width="1.05"/></svg>
<div class="t" style="left:258.60px;top:487.00px;font-size:10.5px;color:#3a3a3a;letter-spacing:-0.043px;">Inverter 1 to Building 01-Roof Area East: Grid Charge</div>
<div style="position:absolute;left:209px;top:499.6px;width:791px;height:16.75px;background:#f4f4f4"></div>
<svg style="position:absolute;left:226.1px;top:502.3px" width="12" height="12" viewBox="0 0 12 12"><rect x="0.6" y="0.6" width="10.8" height="10.8" fill="#fff" stroke="#505050" stroke-width="1.05"/></svg>
<div class="t" style="left:258.60px;top:503.00px;font-size:10.5px;color:#3a3a3a;letter-spacing:-0.081px;">Inverter 1 to Building 01-Roof Area East: Total Cable Losses</div>
<svg style="position:absolute;left:226.1px;top:519.0500000000001px" width="12" height="12" viewBox="0 0 12 12"><rect x="0.6" y="0.6" width="10.8" height="10.8" fill="#fff" stroke="#505050" stroke-width="1.05"/></svg>
<div class="t" style="left:258.60px;top:520.00px;font-size:10.5px;color:#3a3a3a;letter-spacing:-0.066px;">Inverter 1 to Building 01-Roof Area East: PV energy (AC) minus standby use</div>
<div style="position:absolute;left:209px;top:533.1px;width:791px;height:16.75px;background:#f4f4f4"></div>
<svg style="position:absolute;left:226.1px;top:535.8000000000001px" width="12" height="12" viewBox="0 0 12 12"><rect x="0.6" y="0.6" width="10.8" height="10.8" fill="#fff" stroke="#505050" stroke-width="1.05"/></svg>
<div class="t" style="left:258.60px;top:537.00px;font-size:10.5px;color:#3a3a3a;letter-spacing:-0.012px;">Inverter 1 to Building 01-Roof Area East: Feed-in energy</div>
<div style="position:absolute;left:207px;top:556.5px;width:793px;height:40px;background:#ebeff0"></div>
<div class="t" style="left:217.70px;top:574.00px;font-size:10.5px;color:#1f1f1f;letter-spacing:-0.062px;">Energy unit</div>
<div style="position:absolute;left:279.2px;top:568.5px;width:44.5px;height:21.6px;background:linear-gradient(#efefef,#e3e3e3);border:1px solid #b9b9b9;box-sizing:border-box"></div>
<div class="t" style="left:283.60px;top:574.00px;font-size:10.5px;color:#1f1f1f;letter-spacing:-0.100px;">kWh</div>
<svg style="position:absolute;left:312.7px;top:576.8px" width="8" height="5" viewBox="0 0 8 5"><path d="M1 1 L3.5 3.5 L6 1" stroke="#555" stroke-width="0.9" fill="none"/></svg>
<div class="t" style="left:339.00px;top:574.00px;font-size:10.5px;color:#1f1f1f;letter-spacing:0.041px;">Temperature unit</div>
<div style="position:absolute;left:427px;top:568.5px;width:35px;height:21.6px;background:linear-gradient(#efefef,#e3e3e3);border:1px solid #b9b9b9;box-sizing:border-box"></div>
<div class="t" style="left:431.60px;top:574.00px;font-size:10.5px;color:#1f1f1f;letter-spacing:0.218px;">°C</div>
<svg style="position:absolute;left:451px;top:576.8px" width="8" height="5" viewBox="0 0 8 5"><path d="M1 1 L3.5 3.5 L6 1" stroke="#555" stroke-width="0.9" fill="none"/></svg>
<div class="t" style="left:477.60px;top:574.00px;font-size:10.5px;color:#1f1f1f;letter-spacing:-0.151px;">List Separator</div>
<div style="position:absolute;left:548px;top:568.5px;width:26.6px;height:21.6px;background:#fff;border:1px solid #b9b9b9;box-sizing:border-box"></div>
<div class="t" style="left:559.60px;top:574.00px;font-size:10.5px;color:#1f1f1f;">;</div>
<div style="position:absolute;left:869.5px;top:568.3px;width:20px;height:21px;background:linear-gradient(#e8f1fc,#d6e6f9);border:1px solid #cadcf3;border-radius:3px;box-sizing:border-box"></div>
<svg style="position:absolute;left:872.5px;top:572.5px" width="14" height="14" viewBox="0 0 14 14"><circle cx="7" cy="6.6" r="5.9" fill="none" stroke="#5d86c0" stroke-width="1.3"/><text x="4.3" y="10" font-family="Liberation Sans" font-weight="bold" font-size="8.5" fill="#5d86c0">?</text></svg>
<div style="position:absolute;left:898.5px;top:569.7px;width:98px;height:19.6px;background:linear-gradient(#f4f8fd,#dce9f8);border:1px solid #bcd3ee;box-sizing:border-box"></div>
<svg style="position:absolute;left:915.5px;top:571.5px" width="15" height="15" viewBox="0 0 15 15"><path d="M8.5 3.5 V1.5 H1.5 V13.5 H8.5 V11.5" stroke="#4a6fb0" stroke-width="1.5" fill="none"/><path d="M5 7.5 H12.8 M10 4.8 L12.8 7.5 L10 10.2" stroke="#4a6fb0" stroke-width="1.5" fill="none"/></svg>
<div class="t" style="left:936.30px;top:575.00px;font-size:10.5px;color:#1f1f1f;letter-spacing:-0.233px;">Export (1)</div>
<div style="position:absolute;left:894.7px;top:565.9px;width:105.3px;height:28.1px;border:4px solid #e8141b;box-sizing:border-box"></div>
<div style="position:absolute;left:389.9px;top:128.1px;width:57.9px;height:25.7px;border:4px solid #e8141b;box-sizing:border-box"></div>
</body></html>
